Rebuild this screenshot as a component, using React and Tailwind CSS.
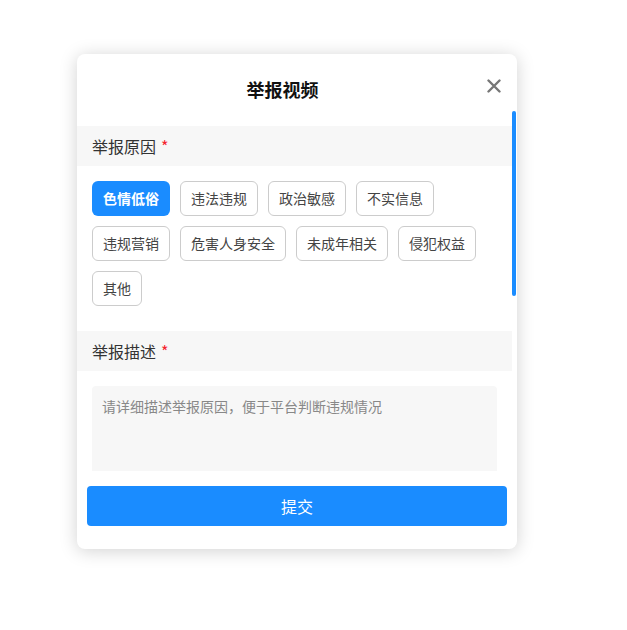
import React from "react";

const reasons1 = ["色情低俗", "违法违规", "政治敏感", "不实信息", "违规营销", "危害人身安全", "未成年相关", "侵犯权益", "其他"];

export default function App() {
  return (
    <div className="min-h-[630px] bg-white pt-[54px] pl-[77px]" style={{ fontFamily: '"Noto Sans CJK SC", "Noto Sans", sans-serif' }}>
      <div className="relative w-[440px] rounded-[8px] bg-white pt-[23px] pb-[23px] shadow-[0_2px_18px_rgba(0,0,0,0.18)]">
        <div className="h-[24px] pr-[29px] flex items-center justify-center text-[18px] font-bold text-[#111] leading-[24px]">举报视频</div>
        <button className="absolute right-[16px] top-[25px] w-[14px] h-[14px] flex items-center justify-center">
          <svg width="14" height="14" viewBox="0 0 14 14">
            <path d="M1.5 1.5 L12.5 12.5 M12.5 1.5 L1.5 12.5" stroke="#777" strokeWidth="2.4" strokeLinecap="round" />
          </svg>
        </button>
        <div className="relative mt-[10px] h-[360px] overflow-hidden pt-[15px]">
          <div className="mr-[5px]">
            <div className="h-[40px] bg-[#f7f7f7] px-[15px] flex items-center text-[16px] text-[#333]">
              举报原因<span className="ml-[5px] text-[#f5222d]">*</span>
            </div>
            <div className="px-[15px] pt-[15px] pb-[25px] flex flex-wrap gap-[10px]">
              {reasons1.map((r, i) => (
                <div
                  key={r}
                  className={
                    i === 0
                      ? "h-[35px] px-[11px] rounded-[6px] bg-[#1a8cff] text-white font-bold text-[14px] flex items-center"
                      : "h-[35px] px-[10px] rounded-[6px] border border-[#cccccc] text-[#444] text-[14px] flex items-center"
                  }
                >
                  {r}
                </div>
              ))}
            </div>
            <div className="h-[40px] bg-[#f7f7f7] px-[15px] flex items-center text-[16px] text-[#333]">
              举报描述<span className="ml-[5px] text-[#f5222d]">*</span>
            </div>
            <div className="mx-[15px] mt-[15px] h-[120px] rounded-[4px] bg-[#f7f7f7] px-[10px] pt-[10px] text-[14px] text-[#888] leading-[20px]">
              请详细描述举报原因，便于平台判断违规情况
            </div>
          </div>
          <div className="absolute right-[1px] top-0 w-[4px] h-[185px] rounded-full bg-[#1a8cff]" />
        </div>
        <button className="mt-[15px] mx-[10px] w-[420px] h-[40px] rounded-[4px] bg-[#1a8cff] text-white text-[16px] flex items-center justify-center">
          提交
        </button>
      </div>
    </div>
  );
}
